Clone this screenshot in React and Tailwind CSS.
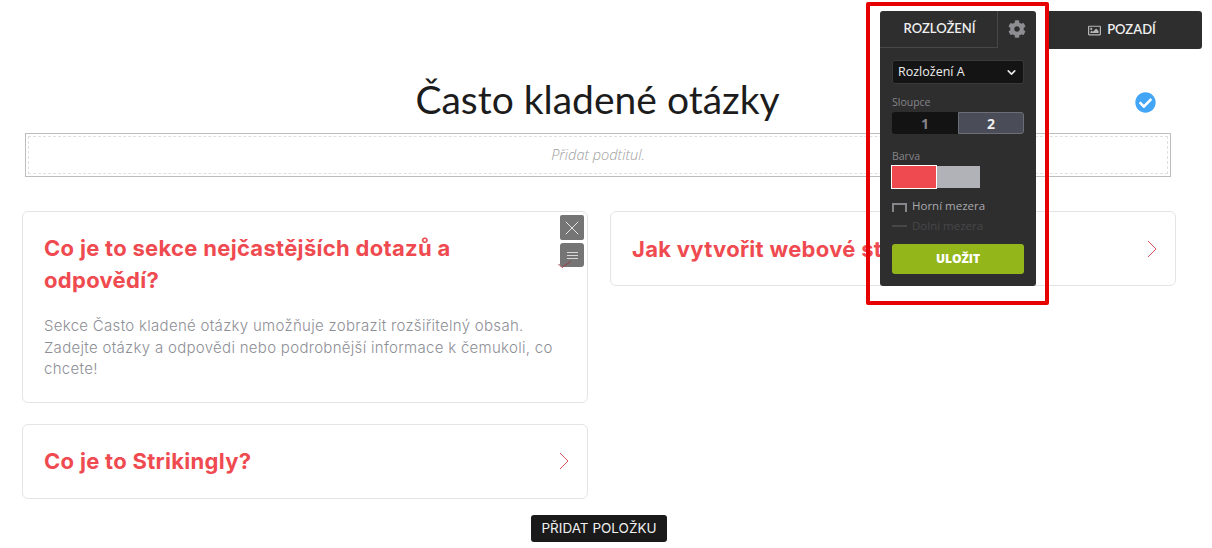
import React from 'react'
import { X, ChevronDown } from 'lucide-react'
import { FaCog, FaCheckCircle, FaRegImage } from 'react-icons/fa'

const bodyFont = "font-['Inter','Open_Sans',sans-serif]"

function FaqCard({ title, open, children, controls }) {
  return (
    <div className="relative rounded-md border border-[#e4e4e6] bg-white pl-[21px] pr-[18px]">
      {controls}
      <div className={open ? 'pt-[20px] pb-[22px]' : 'flex h-[73px] items-center justify-between'}>
        <h3 className={`text-[22px] leading-[32px] font-bold tracking-[0.3px] text-[#ef4a50] ${open ? 'max-w-[470px]' : ''} ${bodyFont}`}>{title}</h3>
        {!open && (
          <svg width="10" height="18" viewBox="0 0 10 18" fill="none" stroke="#d9535c" strokeWidth="1">
            <path d="M1 1l8 8-8 8" />
          </svg>
        )}
        {open && children}
      </div>
    </div>
  )
}

function CardControls() {
  return (
    <div className="absolute top-[3px] right-[3px] flex flex-col gap-[3px]">
      <div className="flex h-[25px] w-[24px] items-center justify-center rounded-[2px] bg-[#757575]">
        <X size={24} strokeWidth={1} className="text-[#e4e4e4]" />
      </div>
      <div className="relative flex h-[24px] w-[24px] items-center justify-center rounded-[3px] bg-[#757575]">
        <div className="flex w-[11px] flex-col gap-[2px]">
          <span className="h-[1px] bg-[#d8d8d8]" />
          <span className="h-[1px] bg-[#d8d8d8]" />
          <span className="h-[1px] bg-[#d8d8d8]" />
        </div>
        <svg width="13" height="7" viewBox="0 0 13 7" fill="none" stroke="#9b3a42" strokeWidth="1" className="absolute top-[18px] left-[-2px]">
          <path d="M0.5 3L4 6.5L12.5 0.5" />
        </svg>
      </div>
    </div>
  )
}

function EditorPanel() {
  return (
    <div className="absolute top-[11px] left-[880px] h-[275px] w-[156px] rounded-[3px] bg-[#2e2e2e] font-['Open_Sans',sans-serif]">
      <div className="flex h-[37px]">
        <div className="flex w-[118px] items-center justify-center border-r border-b border-[#47474a] pl-[2px] text-[13px] font-semibold text-[#f0f0f0] font-['Lato',sans-serif]">
          ROZLOŽENÍ
        </div>
        <div className="flex flex-1 items-center justify-center pb-[2px]">
          <FaCog size={18} className="text-[#8e8e92]" />
        </div>
      </div>
      <div className="px-[12px] pt-[12px]">
        <div className="flex h-[24px] items-center justify-between rounded-[3px] border border-[#3a3a3a] bg-[#141414] pr-[5px] pl-[5px] text-[12.5px] text-[#ececec]">
          <span>Rozložení A</span>
          <ChevronDown size={13} strokeWidth={3} className="text-[#e8e8e8]" />
        </div>
        <div className="mt-[10px] text-[10.5px] leading-[16px] text-[#85858a]">Sloupce</div>
        <div className="mt-[2px] flex h-[22px] text-[14px] font-bold">
          <div className="flex w-[66px] items-center justify-center rounded-l-[3px] bg-[#131313] text-[#85858a]">1</div>
          <div className="flex w-[66px] items-center justify-center rounded-r-[3px] border border-[#6b6e75] bg-[#4a4d57] text-[#f0f0f0]">2</div>
        </div>
        <div className="mt-[14px] text-[10.5px] leading-[16px] text-[#85858a]">Barva</div>
        <div className="mt-[1px] -ml-[1px] flex h-[24px] items-center">
          <div className="h-[24px] w-[46px] border border-white bg-[#ef4a50]" />
          <div className="h-[22px] w-[43px] bg-[#b0b2b8]" />
        </div>
        <div className="mt-[7px] flex h-[20px] items-center gap-[5px] text-[11.5px] text-[#a9a9ad]">
          <span className="mt-[2px] h-[9px] w-[15px] border-x-2 border-t-2 border-[#85858a]" />
          Horní mezera
        </div>
        <div className="flex h-[20px] items-center gap-[5px] text-[11.5px] text-[#47474a]">
          <span className="h-[2px] w-[15px] bg-[#47474a]" />
          Dolní mezera
        </div>
        <button className="mt-[8px] h-[30px] w-[132px] rounded-[3px] bg-[#93b61a] text-[12px] font-extrabold text-white">
          ULOŽIT
        </button>
      </div>
    </div>
  )
}

export default function App() {
  return (
    <div className="relative h-[548px] w-[1212px] overflow-hidden bg-white">
      <div className="pt-[73px] pr-[36px] pl-[22px]">
        <h1 className="pr-[3px] text-center text-[39px] leading-[52px] font-normal text-[#1c1c1c] font-['Lato',sans-serif]">
          Často kladené otázky
        </h1>
        <div className="mt-[8px] ml-[3px] mr-[5px] h-[44px] border border-[#bdbdbd] p-[2px]">
          <div className="flex h-full items-center justify-center border border-dashed border-[#e0e0e0] text-[14.5px] font-light italic text-[#a0a0a0] font-['Open_Sans',sans-serif]">
            Přidat podtitul.
          </div>
        </div>
        <div className="mt-[34px] grid grid-cols-2 gap-x-[22px]">
          <div className="flex flex-col gap-[21px]">
            <FaqCard title="Co je to sekce nejčastějších dotazů a odpovědí?" open controls={<CardControls />}>
              <p className={`mt-[19px] text-[15px] leading-[21.5px] font-light tracking-[0.3px] text-[#8e8f96] ${bodyFont}`}>
                Sekce Často kladené otázky umožňuje zobrazit rozšiřitelný obsah.
                <br />
                Zadejte otázky a odpovědi nebo podrobnější informace k čemukoli, co chcete!
              </p>
            </FaqCard>
            <FaqCard title="Co je to Strikingly?" />
          </div>
          <div>
            {/* the rest of this title sits under the panel */}
            <FaqCard title="Jak vytvořit webové st" />
          </div>
        </div>
        <div className="mt-[16px] flex justify-center">
          <button className={`h-[27px] w-[136px] rounded-[3px] bg-[#1a1a1a] text-[13.5px] text-[#f0f0f0] ${bodyFont}`}>
            PŘIDAT POLOŽKU
          </button>
        </div>
      </div>

      {/* floating toolbar */}
      <div className="absolute top-[11px] left-[1049px] flex h-[38px] w-[153px] items-center justify-center gap-[6px] rounded-r-[3px] bg-[#2e2e2e] pr-[7px] text-[13px] font-semibold text-[#f0f0f0] font-['Lato',sans-serif]">
        <FaRegImage size={13} className="text-[#b5b5b5]" />
        POZADÍ
      </div>
      <div className="absolute top-[2px] left-[866px] h-[303px] w-[183px] rounded-[2px] border-[4px] border-[#e60000]" />
      <EditorPanel />
      <FaCheckCircle size={21} className="absolute top-[92px] left-[1135px] text-[#42a5f5]" />
    </div>
  )
}
